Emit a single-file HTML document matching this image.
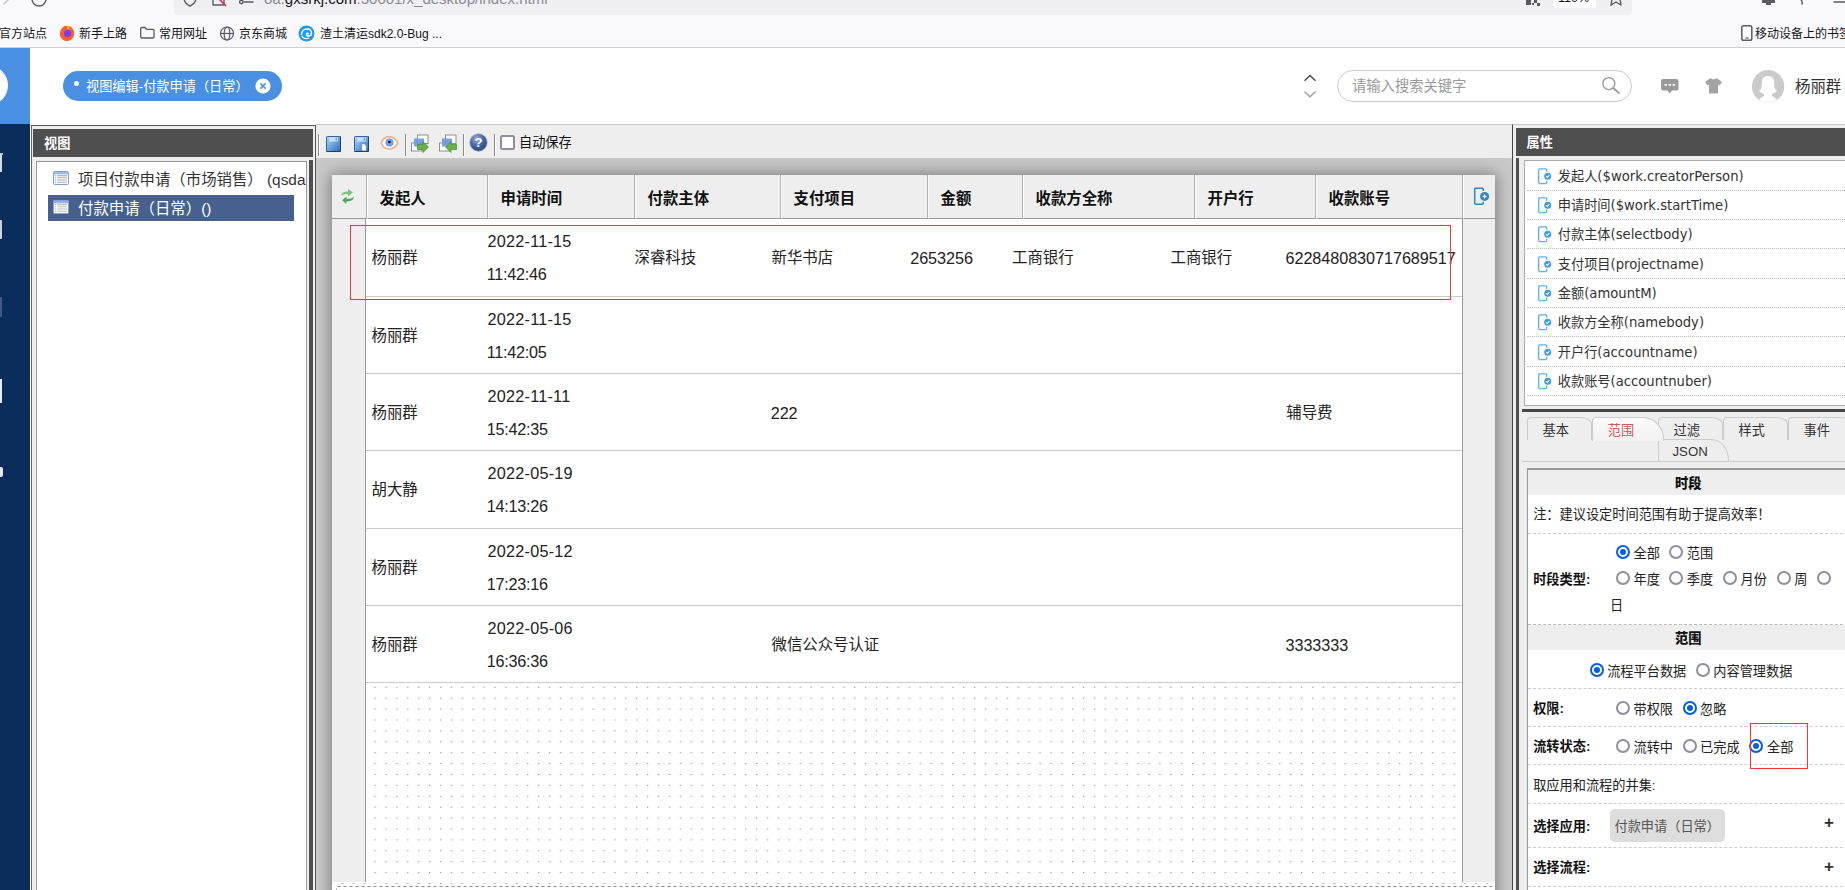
<!DOCTYPE html>
<html lang="zh-CN">
<head>
<meta charset="utf-8">
<title>视图编辑-付款申请（日常）</title>
<style>
*{box-sizing:border-box;margin:0;padding:0}
html,body{width:1845px;height:890px;overflow:hidden;background:#fff}
body{position:relative;font-family:"Liberation Sans","Noto Sans CJK SC",sans-serif;font-size:13px;color:#222}
.abs{position:absolute}
.t{position:absolute;white-space:nowrap;line-height:1}
/* browser chrome */
#chrome{position:absolute;left:0;top:0;width:1845px;height:47px;background:#f9f9fb;border-bottom:1px solid #cfcfd2;height:48px}
#urlbar{position:absolute;left:174px;top:-20px;width:1458px;height:34.5px;background:#f0f0f4;border-radius:4px}
.bm{position:absolute;top:27px;font-size:12px;color:#15141a;white-space:nowrap;line-height:15px}
/* app header */
#apphead{position:absolute;left:0;top:48px;width:1845px;height:76px;background:#fff}
#logo{position:absolute;left:0;top:0;width:30px;height:76px;background:#4a90e2;overflow:hidden}
#logo i{position:absolute;left:-30px;top:18px;width:38px;height:39px;border-radius:50%;background:#fff}
#pill{position:absolute;left:63px;top:23px;width:219px;height:30px;border-radius:15px;background:#4a90e2;color:#fff}
#nav{position:absolute;left:0;top:124px;width:30px;height:766px;background:#0a2d5c;overflow:hidden}

/* left panel */
#lp{position:absolute;left:31px;top:125px;width:285px;height:765px;background:#eee;border-top:1px solid #555;border-left:1px solid #666}
#lp .hd,#rp .hd{position:absolute;background:#4f4f4f;color:#fff;font-weight:bold;font-size:13.2px}
.tree{position:absolute;left:4px;top:35px;width:271px;height:740px;background:#fff;border:1px solid #999;overflow:hidden}
.ti{position:absolute;left:11px;width:246px;height:26px;font-size:15.4px;line-height:26px;white-space:nowrap;color:#333}
.ti span{position:absolute;left:30px;top:0}
.ti svg{position:absolute;left:5px;top:5px}
.i1 svg{top:4px}.i2 span{top:1.300px}.i2 svg{top:5.300px}
/* center */
#ct{position:absolute;left:316px;top:124px;width:1196px;height:766px;background:#eee;border-top:1px solid #c8c8c8;overflow:hidden}
.sep{position:absolute;top:9px;width:2px;height:22px;background:#8c8c8c;border-right:1px solid #fafafa}
#design{position:absolute;left:0;top:33px;width:1196px;height:740px;background:#c9c9c9;overflow:hidden}
#tbl{position:absolute;left:16px;top:17px;width:1163px;height:730px;background:#fff;box-shadow:0 0 15px 1px #777}
.th{position:absolute;top:0;height:44px;background:#eee;border-left:1px solid #fbfbfb;border-right:1px solid #b2b2b2;border-bottom:1px solid #999;font-weight:bold;font-size:15.4px;line-height:48px;color:#111;padding-left:11.5px;white-space:nowrap;overflow:hidden}
.row{position:absolute;left:34px;width:1096px;border-bottom:1px solid #ccc;font-size:15.4px;color:#222}
.row span{position:absolute;white-space:nowrap;line-height:20px}
.row .c{top:29.4px}
.row .d1{top:12.3px;font-size:16.2px;letter-spacing:.25px}.row .d2{top:44.9px;font-size:16.2px;letter-spacing:-.25px;margin-left:-.8px}.row .n{font-size:16.2px;letter-spacing:-.05px;top:28.6px;margin-left:-.8px}
#dots{position:absolute;left:0;top:508px}

/* right panel */
#rp{position:absolute;left:1512px;top:124px;width:333px;height:766px;background:#eee;border-top:1px solid #c8c8c8;border-left:1.5px solid #444;overflow:hidden}
.plist{position:absolute;left:11px;top:35px;width:330px;height:246px;background:#fff;border:1px solid #aaa}
.pi{position:absolute;left:2px;width:330px;height:29.3px;border-bottom:1px dotted #bbb;font-family:"DejaVu Sans","Noto Sans CJK SC",sans-serif;font-size:13.2px;line-height:29px;color:#333;white-space:nowrap}
.pi span{position:absolute;left:30.800px;top:.4px}
.pi svg{position:absolute;left:11px;top:6.400px}
.tab{position:absolute;height:22.5px;width:65.5px;border:1px solid #ccc;border-bottom:0;border-radius:4px 12px 0 0/4px 7px 0 0;font-size:13.2px;line-height:25px;padding-left:15px;color:#333;white-space:nowrap;background:#eee}
.pbox{position:absolute;left:14px;top:342.5px;width:330px;height:440px;background:#fff;border-left:1px solid #999;border-top:2px solid #999}
.sh{position:absolute;left:0;width:330px;height:25.5px;background:#eee;font-weight:bold;font-size:13.2px;line-height:27px;color:#111}
.sh b{position:absolute;left:147px}
.dl{position:absolute;left:0;width:330px;height:0;border-top:1px dashed #ccc}
.lb{position:absolute;left:6px;font-size:13.2px;line-height:16px;font-weight:bold;color:#111;white-space:nowrap}
.rt{position:absolute;font-size:13.2px;line-height:16px;color:#222;white-space:nowrap}
.rd{position:absolute;width:14px;height:14px;border-radius:50%;border:2px solid #8f8f9d;background:#fff}
.rd.on{border-color:#0060df}
.rd.on:after{content:"";position:absolute;left:2px;top:2px;width:6px;height:6px;border-radius:50%;background:#0060df}
</style>
</head>
<body>
<div id="chrome">
  <div id="urlbar"></div>
  <svg class="abs" style="left:0;top:0" width="1845" height="16" viewBox="0 0 1845 16">
    <g fill="none" stroke="#5b5b66" stroke-width="1.4" stroke-linecap="round" stroke-linejoin="round">
      <path d="M-2 -1H9M4 -6L9 -1L4 4" stroke="#c4c4ca"/>
      <circle cx="39" cy="-1" r="7"/>
      <path d="M184 -8V-2C184 3 188 5 190 6C192 5 196 3 196 -2V-8Z"/>
      <path d="M213 -6H224V5H213Z"/>
      <path d="M244 2H253"/><circle cx="241.300" cy="2" r="1.700"/>
      <path d="M1611 5L1616 2L1621 5L1620 -1L1624 -5"/>
      <path d="M1611 5L1612 -1L1608 -5"/>
      <path d="M1834 2H1846"/>
      <path d="M1796 -2a5 5 0 0 1 6 6"/>
    </g>
    <path d="M212 -8L226 6" stroke="#e22850" stroke-width="1.6"/>
    <path d="M1762 -4H1775V3H1771V5H1766V3H1762Z" fill="#5b5b66"/>
    <g fill="#5b5b66"><rect x="1526" y="0" width="5" height="5"/><rect x="1534" y="0" width="3" height="3"/><rect x="1537" y="3" width="3" height="3"/><rect x="1532" y="3" width="2" height="2"/></g>
    <rect x="1553" y="-10" width="43" height="18" rx="3" fill="#fff"/>
  </svg>
  <div class="t" style="left:264px;top:-9px;font-size:15px;color:#8a8a93;line-height:15px;letter-spacing:0">oa.<span style="color:#15141a">gxsrkj.com</span>:30001/x_desktop/index.html</div>
  <div class="t" style="left:1558px;top:-8.500px;font-size:12.5px;color:#15141a;line-height:13px">110%</div>
  <div class="bm" style="left:-1px">官方站点</div>
  <svg class="abs" style="left:59px;top:25px" width="16" height="17" viewBox="0 0 16 17"><circle cx="8" cy="9" r="7.2" fill="#ff9a1f"/><path d="M2 5C3 2 6 0 9 1C12 1 15 4 15 8C15 13 11 16 7 16C4 15 1 12 1 9C1 7 1.500 6 2 5Z" fill="#ff5c2e"/><circle cx="8.600" cy="8.500" r="3.600" fill="#7a3df0"/><path d="M8 1C9.500 1.500 10.500 2.500 11 4C10 3.500 9 3.500 8 4Z" fill="#ffd43b"/></svg>
  <div class="bm" style="left:79px">新手上路</div>
  <svg class="abs" style="left:139px;top:26px" width="17" height="14" viewBox="0 0 17 14"><path d="M1.700 2.500a1 1 0 0 1 1-1H6l1.600 1.800H14a1 1 0 0 1 1 1V11a1 1 0 0 1-1 1H2.700a1 1 0 0 1-1-1Z" fill="none" stroke="#5b5b66" stroke-width="1.300"/></svg>
  <div class="bm" style="left:159px">常用网址</div>
  <svg class="abs" style="left:219px;top:25px" width="16" height="16" viewBox="0 0 16 16"><g fill="none" stroke="#5b5b66" stroke-width="1.200"><circle cx="8" cy="8.500" r="6.500"/><ellipse cx="8" cy="8.500" rx="2.800" ry="6.500"/><path d="M1.500 8.500H14.500"/></g></svg>
  <div class="bm" style="left:239px">京东商城</div>
  <svg class="abs" style="left:298px;top:25px" width="17" height="17" viewBox="0 0 17 17"><circle cx="8.500" cy="8.500" r="8" fill="#1e9bf0"/><path d="M3.500 9.500C3.500 6 6 4 9 4C11.500 4 13.500 5.500 13.500 8C13.500 10 12 11 10.500 11C9 11 8.200 10 8.500 9C8.800 8 10 8 10.300 8.800" fill="none" stroke="#fff" stroke-width="1.500" stroke-linecap="round"/><path d="M4 11.500C5.500 13.500 8.500 14 10.500 13" fill="none" stroke="#fff" stroke-width="1.300" stroke-linecap="round"/></svg>
  <div class="bm" style="left:320px">渣土清运sdk2.0-Bug ...</div>
  <svg class="abs" style="left:1740px;top:24px" width="14" height="18" viewBox="0 0 14 18"><rect x="1.800" y="1.800" width="10" height="14.500" rx="1.800" fill="none" stroke="#5b5b66" stroke-width="1.500"/><path d="M5.500 14H8.500" stroke="#5b5b66" stroke-width="1.200"/></svg>
  <div class="bm" style="left:1755px">移动设备上的书签</div>
</div>
<div id="apphead">
  <div id="logo"><i></i></div>
  <div id="pill">
    <i class="abs" style="left:11px;top:10px;width:5.400px;height:5.400px;border-radius:50%;background:#fff"></i>
    <div class="t" style="left:23px;top:7.600px;font-size:13.200px;line-height:16px;color:#fff">视图编辑-付款申请（日常）</div>
    <svg class="abs" style="left:192px;top:6.500px" width="16" height="16" viewBox="0 0 16 16"><circle cx="8" cy="8" r="7.600" fill="#fff"/><path d="M5.400 5.400L10.600 10.600M10.600 5.400L5.400 10.600" stroke="#4a90e2" stroke-width="1.500"/></svg>
  </div>
  <svg class="abs" style="left:1300px;top:24px" width="20" height="28" viewBox="0 0 20 28"><path d="M4.500 8.800L10 3.500L15.500 8.800" fill="none" stroke="#444" stroke-width="1.300"/><path d="M4.500 19.500L10 24.800L15.500 19.500" fill="none" stroke="#999" stroke-width="1.200"/></svg>
  <div class="abs" style="left:1337px;top:22px;width:295px;height:32px;border:1px solid #ccc;border-radius:16px;background:#fff"></div>
  <div class="t" style="left:1352px;top:30px;font-size:14.300px;line-height:17px;color:#999">请输入搜索关键字</div>
  <svg class="abs" style="left:1599.500px;top:27.200px" width="22" height="22" viewBox="0 0 22 22"><circle cx="8.800" cy="8.600" r="6" fill="none" stroke="#999" stroke-width="1.400"/><path d="M13.200 13L19 18" stroke="#999" stroke-width="1.700" stroke-linecap="round"/></svg>
  <svg class="abs" style="left:1660px;top:30px" width="20" height="17" viewBox="0 0 20 17"><path d="M3 1H16.500a2 2 0 0 1 2 2V10.500a2 2 0 0 1-2 2H12L9.800 15.500L7.600 12.500H3a2 2 0 0 1-2-2V3a2 2 0 0 1 2-2Z" fill="#999"/><g fill="#fff"><rect x="4.500" y="6" width="2.400" height="1.700"/><rect x="8.600" y="6" width="2.400" height="1.700"/><rect x="12.700" y="6" width="2.400" height="1.700"/></g></svg>
  <svg class="abs" style="left:1704px;top:29px" width="20" height="18" viewBox="0 0 20 18"><path d="M6.500 1C7.500 2.800 11.500 2.800 12.500 1L18 5L15.500 8.500L14 7.500V16.500H5V7.500L3.500 8.500L1 5Z" fill="#a3a3a3"/></svg>
  <svg class="abs" style="left:1752px;top:22px" width="33" height="34" viewBox="0 0 33 34"><defs><clipPath id="avc"><ellipse cx="16.100" cy="16.400" rx="16.100" ry="16.400"/></clipPath></defs><ellipse cx="16.100" cy="16.400" rx="16.100" ry="16.400" fill="#cbcbcb"/><g clip-path="url(#avc)" fill="#fff"><path d="M16 6.100C11.500 6.100 9.900 9 9.900 13C9.900 17 9.500 19 7 21C9 23 11.500 23.500 12.300 24.600C12 27 9 27.500 7.300 29.200C10 33 14 34 16 34C18 34 22 33 24.700 29.200C23 27.500 20 27 19.700 24.600C20.500 23.500 23 23 25 21C22.500 19 22.100 17 22.100 13C22.100 9 20.500 6.100 16 6.100Z"/></g></svg>
  <div class="t" style="left:1795px;top:29.800px;font-size:15.400px;line-height:18px;color:#333">杨丽群</div>
</div>
<div id="nav">
  <i class="abs" style="left:0;top:29px;width:2px;height:19px;background:#d5dbe6"></i>
  <i class="abs" style="left:0;top:29px;width:3px;height:2px;background:#b8c2d3"></i>
  <i class="abs" style="left:0;top:95.500px;width:2px;height:19.500px;background:#ccd3df;border-radius:0 1px 1px 0"></i>
  <i class="abs" style="left:0;top:172.500px;width:1.500px;height:20px;background:#3f5884"></i>
  <i class="abs" style="left:0;top:255px;width:2px;height:23.500px;background:#e6eaf0"></i>
  <i class="abs" style="left:0;top:342.500px;width:3px;height:10.500px;background:#e6eaf0;border-radius:0 2px 2px 0"></i>
</div>
<div id="lp">
  <div class="hd" style="left:1px;top:3px;width:280px;height:28px;line-height:30px;padding-left:11px">视图</div>
  <div class="tree">
    <div class="ti i1" style="top:5px"><svg width="16" height="14" viewBox="0 0 16 14"><rect x=".5" y=".5" width="15" height="13" rx="1" fill="#f6f9fe" stroke="#7f9ed8"/><rect x="1" y="1" width="14" height="2.300" fill="#9dbbeb"/><g stroke="#b4b4b4" stroke-width="1.100"><path d="M4.200 4.600H14M4.200 6.800H14M4.200 9H14M4.200 11.200H14"/></g><path d="M2.600 4V12" stroke="#7fb0f0" stroke-width="1" stroke-dasharray="1.100 1.100"/></svg><span>项目付款申请（市场销售） (qsdasdasd)</span></div>
    <div class="ti i2" style="top:32.700px;background:#47618f;color:#fff"><svg width="16" height="14" viewBox="0 0 16 14"><rect x=".5" y=".5" width="15" height="13" rx="1" fill="#fff" stroke="#8aa3d4"/><rect x="1" y="1" width="14" height="2.300" fill="#8fb0e8"/><g stroke="#bdbdbd" stroke-width="1.100"><path d="M4.200 4.600H14M4.200 6.800H14M4.200 9H14M4.200 11.200H14"/></g><path d="M2.600 4V12" stroke="#7fb0f0" stroke-width="1" stroke-dasharray="1.100 1.100"/></svg><span>付款申请（日常）()</span></div>
  </div>
  <div class="abs" style="left:277px;top:33.500px;width:4px;height:740px;background:#4f4f4f"></div>
  <div class="abs" style="left:283px;top:-1px;width:1.500px;height:770px;background:#555"></div>
</div>
<div id="ct">
  <i class="sep" style="left:2px"></i><svg class="abs" style="left:10px;top:11px" width="15" height="16" viewBox="0 0 15 16"><defs><linearGradient id="sg" x1="0" y1="0" x2="1" y2="1"><stop offset="0" stop-color="#b4d6f8"/><stop offset=".5" stop-color="#6aa6e2"/><stop offset="1" stop-color="#2f66b0"/></linearGradient></defs><rect x=".5" y=".5" width="14" height="15" rx=".8" fill="url(#sg)" stroke="#2c5590" stroke-width=".9"/><path d="M.5 15.500H14.500V.5" fill="none" stroke="#1d3a6b" stroke-width=".9"/><rect x="3.200" y="1.300" width="8.800" height="4.200" fill="#d4e6fa" opacity=".85"/><rect x="9.600" y="1.800" width="1.400" height="2.800" fill="#6c9ad6"/></svg><svg class="abs" style="left:38px;top:11px" width="15" height="16" viewBox="0 0 15 16"><rect x=".5" y=".5" width="14" height="15" rx=".8" fill="url(#sg)" stroke="#2c5590" stroke-width=".9"/><path d="M.5 15.500H14.500V.5" fill="none" stroke="#1d3a6b" stroke-width=".9"/><rect x="3.200" y="1.300" width="8.800" height="4.200" fill="#d4e6fa" opacity=".85"/><rect x="9.600" y="1.800" width="1.400" height="2.800" fill="#6c9ad6"/><path d="M7.800 8H10.800L12.300 10V14.800H7.800Z" fill="#fff" stroke="#5a6f90" stroke-width=".4"/></svg><svg class="abs" style="left:64px;top:11px" width="20" height="15" viewBox="0 0 20 15"><path d="M1.200 7C4 -1.300 14 -1.300 17.800 7C14 14.800 4 14.800 1.200 7Z" fill="#fff" stroke="#e8b897" stroke-width="1.800"/><circle cx="9.500" cy="6.400" r="4" fill="#6f97e6"/><circle cx="9.500" cy="6.400" r="2.600" fill="#7ea3ea"/><circle cx="9.400" cy="6" r="1.300" fill="#0c0c18"/></svg><i class="sep" style="left:89px"></i><svg class="abs" style="left:94px;top:8.700px" width="20" height="20" viewBox="0 0 20 20"><rect x="7.500" y="1" width="10.500" height="8.500" fill="#fff" stroke="#8d8d8d"/><rect x="1.500" y="9" width="10.500" height="8" fill="#fff" stroke="#8d8d8d"/><rect x="4" y="4.500" width="10" height="8" fill="#6c98dc" opacity=".9"/><path d="M7.500 10.500H13V7.500L18.500 13L13 18.500V15.500H7.500Z" fill="#6ab04c" stroke="#3f8f2b" stroke-width=".7"/></svg><svg class="abs" style="left:122px;top:8.700px" width="20" height="20" viewBox="0 0 20 20"><rect x="7.500" y="1" width="10.500" height="8.500" fill="#fff" stroke="#8d8d8d"/><rect x="1.500" y="9" width="10.500" height="8" fill="#fff" stroke="#8d8d8d"/><rect x="4" y="4.500" width="10" height="8" fill="#6c98dc" opacity=".9"/><path d="M18.500 10.500H13V7.500L7.500 13L13 18.500V15.500H18.500Z" fill="#6ab04c" stroke="#3f8f2b" stroke-width=".7"/></svg><i class="sep" style="left:147px"></i><svg class="abs" style="left:153px;top:8.300px" width="19" height="19" viewBox="0 0 19 19"><defs><radialGradient id="hg" cx=".4" cy=".3" r=".8"><stop offset="0" stop-color="#9fb3d6"/><stop offset=".55" stop-color="#3d5f9a"/><stop offset="1" stop-color="#27426f"/></radialGradient></defs><circle cx="9.500" cy="9.500" r="8.700" fill="url(#hg)" stroke="#9aa6c4" stroke-width=".8"/><text x="9.500" y="14" text-anchor="middle" font-family="Liberation Sans,sans-serif" font-weight="bold" font-size="13" fill="#fff">?</text></svg><i class="sep" style="left:178px"></i>
  <i class="abs" style="left:184px;top:10.200px;width:15px;height:15px;border:2px solid #8f8f9d;border-radius:2.500px;background:#fff"></i>
  <div class="t" style="left:203px;top:10px;font-size:13.200px;line-height:16px;color:#111">自动保存</div>
  <div id="design">
    <div id="tbl">
      <svg id="dots" width="1163" height="222"><defs><pattern id="dp" x="9.800" y="3.800" width="10.900" height="10.900" patternUnits="userSpaceOnUse"><rect x="0" y="0" width="1.300" height="1" fill="#8e8e8e"/></pattern></defs><rect width="1163" height="222" fill="url(#dp)"/></svg>
      <div class="abs" style="left:34px;top:44px;width:1096px;height:464px;background:#fff"></div>
      <div class="th" style="left:0;width:35px;padding:0;border-left:0"><svg class="abs" style="left:8px;top:13px" width="16" height="17" viewBox="0 0 16 17"><path d="M1 7.600C1.500 4.500 4.500 3.200 8.100 3.400V1L12.900 4.400L8.100 8.200V6C5.500 5.800 3 6.200 1 7.600Z" fill="#7cc47a"/><path d="M14 9C13.500 12.200 10.500 13.600 6.400 13.400V15.900L2.100 12.300L6.400 8.400V10.800C9.500 11 12 10.400 14 9Z" fill="#56a556"/></svg></div><div class="th" style="left:35px;width:121px">发起人</div><div class="th" style="left:156px;width:147px">申请时间</div><div class="th" style="left:303px;width:146px">付款主体</div><div class="th" style="left:449px;width:147px">支付项目</div><div class="th" style="left:596px;width:95px">金额</div><div class="th" style="left:691px;width:172px">收款方全称</div><div class="th" style="left:863px;width:121px">开户行</div><div class="th" style="left:984px;width:147px">收款账号</div><div class="th" style="left:1131px;width:32px;padding:0;border-right:0"><svg class="abs" style="left:9px;top:12px" width="18" height="19" viewBox="0 0 18 19"><path d="M10.200 4V2.200a1 1 0 0 0-1-1H2.700a1 1 0 0 0-1 1V16.300a1 1 0 0 0 1 1H9.200a1 1 0 0 0 1-1V14.800" fill="none" stroke="#2f84c4" stroke-width="1.500"/><circle cx="11.600" cy="9.400" r="4.500" fill="#2f84c4"/><path d="M11.600 6.900L12.500 8.500L14.100 9.400L12.500 10.300L11.600 11.900L10.700 10.300L9.100 9.400L10.700 8.500Z" fill="#e4eef6"/></svg></div>
      <div class="abs" style="left:0;top:44px;width:34px;height:663px;background:#eee;border-right:1px solid #999"></div>
      <div class="abs" style="left:1130px;top:44px;width:33px;height:663px;background:#eee;border-left:1px solid #999"></div>
      <div class="row" style="top:44px;height:78px"><span class="c" style="left:5.5px">杨丽群</span><span class="d1" style="left:121.5px">2022-11-15</span><span class="d2" style="left:121.5px">11:42:46</span><span class="c" style="left:268.5px">深睿科技</span><span class="c" style="left:405.5px">新华书店</span><span class="n" style="left:545.0px">2653256</span><span class="c" style="left:646.0px">工商银行</span><span class="c" style="left:804.5px">工商银行</span><span class="n" style="left:920.3px">6228480830717689517</span></div><div class="row" style="top:122px;height:77px"><span class="c" style="left:5.5px">杨丽群</span><span class="d1" style="left:121.5px">2022-11-15</span><span class="d2" style="left:121.5px">11:42:05</span></div><div class="row" style="top:199px;height:77px"><span class="c" style="left:5.5px">杨丽群</span><span class="d1" style="left:121.5px">2022-11-11</span><span class="d2" style="left:121.5px">15:42:35</span><span class="n" style="left:405.5px">222</span><span class="c" style="left:920.3px">辅导费</span></div><div class="row" style="top:276px;height:78px"><span class="c" style="left:5.5px">胡大静</span><span class="d1" style="left:121.5px">2022-05-19</span><span class="d2" style="left:121.5px">14:13:26</span></div><div class="row" style="top:354px;height:77px"><span class="c" style="left:5.5px">杨丽群</span><span class="d1" style="left:121.5px">2022-05-12</span><span class="d2" style="left:121.5px">17:23:16</span></div><div class="row" style="top:431px;height:77px"><span class="c" style="left:5.5px">杨丽群</span><span class="d1" style="left:121.5px">2022-05-06</span><span class="d2" style="left:121.5px">16:36:36</span><span class="c" style="left:405.5px">微信公众号认证</span><span class="n" style="left:920.3px">3333333</span></div>
      <svg class="abs" style="left:4px;top:711px" width="1157" height="6"><rect x=".5" y=".5" width="1156" height="12" rx="1" fill="none" stroke="#8a8a8a" stroke-width="1" stroke-dasharray="3 3"/></svg>
    </div>
    <div class="abs" style="left:34px;top:67px;width:1101px;height:75px;border:1px solid #ff3333"></div>
  </div>
</div>
<div id="rp">
  <div class="hd" style="left:2.500px;top:3px;width:340px;height:28px;line-height:29px;padding-left:11px">属性</div>
  <div class="abs" style="left:2.500px;top:33px;width:3.500px;height:740px;background:#4f4f4f"></div>
  <div class="plist"><div class="pi" style="top:0.5px"><svg width="14" height="17" viewBox="0 0 14 17"><path d="M8.700 3.800V1.800a1 1 0 0 0-1-1H1.700a1 1 0 0 0-1 1V14.600a1 1 0 0 0 1 1H7.700a1 1 0 0 0 1-1V12.800" fill="none" stroke="#5ab0ea" stroke-width="1.300"/><circle cx="9.700" cy="8.200" r="3.500" fill="#3f9de2"/><path d="M8.100 8.300L9.300 9.500L11.300 7.200" fill="none" stroke="#fff" stroke-width="1.100"/></svg><span>发起人($work.creatorPerson)</span></div><div class="pi" style="top:29.8px"><svg width="14" height="17" viewBox="0 0 14 17"><path d="M8.700 3.800V1.800a1 1 0 0 0-1-1H1.700a1 1 0 0 0-1 1V14.600a1 1 0 0 0 1 1H7.700a1 1 0 0 0 1-1V12.800" fill="none" stroke="#5ab0ea" stroke-width="1.300"/><circle cx="9.700" cy="8.200" r="3.500" fill="#3f9de2"/><path d="M8.100 8.300L9.300 9.500L11.300 7.200" fill="none" stroke="#fff" stroke-width="1.100"/></svg><span>申请时间($work.startTime)</span></div><div class="pi" style="top:59.1px"><svg width="14" height="17" viewBox="0 0 14 17"><path d="M8.700 3.800V1.800a1 1 0 0 0-1-1H1.700a1 1 0 0 0-1 1V14.600a1 1 0 0 0 1 1H7.700a1 1 0 0 0 1-1V12.800" fill="none" stroke="#5ab0ea" stroke-width="1.300"/><circle cx="9.700" cy="8.200" r="3.500" fill="#3f9de2"/><path d="M8.100 8.300L9.300 9.500L11.300 7.200" fill="none" stroke="#fff" stroke-width="1.100"/></svg><span>付款主体(selectbody)</span></div><div class="pi" style="top:88.4px"><svg width="14" height="17" viewBox="0 0 14 17"><path d="M8.700 3.800V1.800a1 1 0 0 0-1-1H1.700a1 1 0 0 0-1 1V14.600a1 1 0 0 0 1 1H7.700a1 1 0 0 0 1-1V12.800" fill="none" stroke="#5ab0ea" stroke-width="1.300"/><circle cx="9.700" cy="8.200" r="3.500" fill="#3f9de2"/><path d="M8.100 8.300L9.300 9.500L11.300 7.200" fill="none" stroke="#fff" stroke-width="1.100"/></svg><span>支付项目(projectname)</span></div><div class="pi" style="top:117.7px"><svg width="14" height="17" viewBox="0 0 14 17"><path d="M8.700 3.800V1.800a1 1 0 0 0-1-1H1.700a1 1 0 0 0-1 1V14.600a1 1 0 0 0 1 1H7.700a1 1 0 0 0 1-1V12.800" fill="none" stroke="#5ab0ea" stroke-width="1.300"/><circle cx="9.700" cy="8.200" r="3.500" fill="#3f9de2"/><path d="M8.100 8.300L9.300 9.500L11.300 7.200" fill="none" stroke="#fff" stroke-width="1.100"/></svg><span>金额(amountM)</span></div><div class="pi" style="top:147.0px"><svg width="14" height="17" viewBox="0 0 14 17"><path d="M8.700 3.800V1.800a1 1 0 0 0-1-1H1.700a1 1 0 0 0-1 1V14.600a1 1 0 0 0 1 1H7.700a1 1 0 0 0 1-1V12.800" fill="none" stroke="#5ab0ea" stroke-width="1.300"/><circle cx="9.700" cy="8.200" r="3.500" fill="#3f9de2"/><path d="M8.100 8.300L9.300 9.500L11.300 7.200" fill="none" stroke="#fff" stroke-width="1.100"/></svg><span>收款方全称(namebody)</span></div><div class="pi" style="top:176.3px"><svg width="14" height="17" viewBox="0 0 14 17"><path d="M8.700 3.800V1.800a1 1 0 0 0-1-1H1.700a1 1 0 0 0-1 1V14.600a1 1 0 0 0 1 1H7.700a1 1 0 0 0 1-1V12.800" fill="none" stroke="#5ab0ea" stroke-width="1.300"/><circle cx="9.700" cy="8.200" r="3.500" fill="#3f9de2"/><path d="M8.100 8.300L9.300 9.500L11.300 7.200" fill="none" stroke="#fff" stroke-width="1.100"/></svg><span>开户行(accountname)</span></div><div class="pi" style="top:205.6px"><svg width="14" height="17" viewBox="0 0 14 17"><path d="M8.700 3.800V1.800a1 1 0 0 0-1-1H1.700a1 1 0 0 0-1 1V14.600a1 1 0 0 0 1 1H7.700a1 1 0 0 0 1-1V12.800" fill="none" stroke="#5ab0ea" stroke-width="1.300"/><circle cx="9.700" cy="8.200" r="3.500" fill="#3f9de2"/><path d="M8.100 8.300L9.300 9.500L11.300 7.200" fill="none" stroke="#fff" stroke-width="1.100"/></svg><span>收款账号(accountnuber)</span></div></div>
  <div class="abs" style="left:9px;top:283.500px;width:340px;height:3.500px;background:#444"></div>
  <div class="tab" style="left:13.5px;top:292px">基本</div><div class="tab" style="left:78.8px;top:292px;color:#cf5a5e;background:#f7f7f7;z-index:2;height:23.500px;width:72px;border-radius:4px 21px 0 0/4px 22px 0 0;background:linear-gradient(#fbfbfb,#f1f1f1)">范围</div><div class="tab" style="left:144.5px;top:292px">过滤</div><div class="tab" style="left:209.5px;top:292px">样式</div><div class="tab" style="left:274.5px;top:292px">事件</div><div class="tab" style="left:144.5px;top:313.500px;height:22.500px;line-height:23.500px;width:71px;border-radius:3px 18px 0 0/3px 21px 0 0;padding-left:14px">JSON</div>
  <div class="abs" style="left:9px;top:335.500px;width:340px;height:1px;background:#ccc"></div>
  <div class="pbox"><div class="sh" style="top:0"><b>时段</b></div><span class="rt" style="left:5.2px;top:37.7px">注：建议设定时间范围有助于提高效率！</span><div class="dl" style="top:63.5px"></div><i class="rd on" style="left:87.7px;top:75.8px"></i><span class="rt" style="left:105.5px;top:76.0px">全部</span><i class="rd" style="left:140.6px;top:75.8px"></i><span class="rt" style="left:158.8px;top:76.0px">范围</span><span class="lb" style="left:5.2px;top:102.2px">时段类型:</span><i class="rd" style="left:87.7px;top:101.8px"></i><span class="rt" style="left:105.5px;top:102.0px">年度</span><i class="rd" style="left:140.6px;top:101.8px"></i><span class="rt" style="left:158.8px;top:102.0px">季度</span><i class="rd" style="left:194.6px;top:101.8px"></i><span class="rt" style="left:212.5px;top:102.0px">月份</span><i class="rd" style="left:248.8px;top:101.8px"></i><span class="rt" style="left:266.3px;top:102.0px">周</span><i class="rd" style="left:288.7px;top:101.8px"></i><span class="rt" style="left:82.0px;top:128.2px">日</span><div class="dl" style="top:154.0px;border-color:#bbb"></div><div class="sh" style="top:155.0px"><b>范围</b></div><i class="rd on" style="left:61.7px;top:193.8px"></i><span class="rt" style="left:79.2px;top:194.0px">流程平台数据</span><i class="rd" style="left:167.8px;top:193.8px"></i><span class="rt" style="left:185.3px;top:194.0px">内容管理数据</span><div class="dl" style="top:218.5px"></div><span class="lb" style="left:5.2px;top:231.7px">权限:</span><i class="rd" style="left:87.7px;top:231.8px"></i><span class="rt" style="left:105.5px;top:232.0px">带权限</span><i class="rd on" style="left:154.7px;top:231.8px"></i><span class="rt" style="left:172.1px;top:232.0px">忽略</span><div class="dl" style="top:256.5px"></div><span class="lb" style="left:5.2px;top:269.7px">流转状态:</span><i class="rd" style="left:87.7px;top:269.8px"></i><span class="rt" style="left:105.5px;top:270.0px">流转中</span><i class="rd" style="left:154.7px;top:269.8px"></i><span class="rt" style="left:172.1px;top:270.0px">已完成</span><i class="rd on" style="left:220.8px;top:269.8px"></i><span class="rt" style="left:239.0px;top:270.0px">全部</span><div class="dl" style="top:294.5px"></div><span class="rt" style="left:5.2px;top:308.7px">取应用和流程的并集:</span><div class="dl" style="top:333.5px"></div><span class="lb" style="left:5.2px;top:349.7px">选择应用:</span><div class="abs" style="left:81.5px;top:339.8px;width:115px;height:32.500px;background:#ddd;border-radius:5px"></div><span class="rt" style="left:86.5px;top:349.2px;color:#555">付款申请（日常）</span><span class="rt" style="left:296.0px;top:345.7px;font-size:17px;font-weight:bold;color:#333;line-height:16px">+</span><div class="dl" style="top:377.8px"></div><span class="lb" style="left:5.2px;top:390.7px">选择流程:</span><span class="rt" style="left:296.0px;top:389.2px;font-size:17px;font-weight:bold;color:#333;line-height:16px">+</span><div class="dl" style="top:416.3px"></div><div class="abs" style="left:221.7px;top:253.7px;width:58px;height:45.500px;border:1px solid #ff3333"></div></div>
</div>
</body>
</html>
